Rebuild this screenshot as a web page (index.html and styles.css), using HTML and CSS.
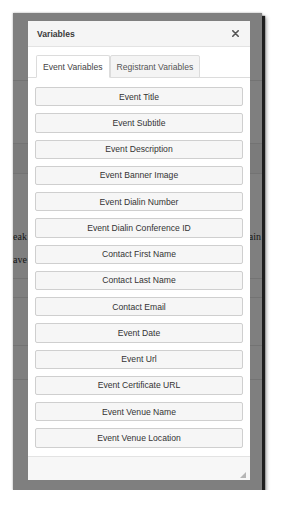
FILE: index.html
```html
<!DOCTYPE html>
<html>
<head>
  <meta charset="utf-8">
  <link rel="stylesheet" href="styles.css">
</head>
<body>
  <div class="screen">
    <div class="page">
      <div class="row r1"></div>
      <div class="row r2"></div>
      <div class="row r3"></div>
      <div class="row r4">
        <div class="line"><span>eak</span><span>ain</span></div>
        <div class="line"><span>ave</span></div>
      </div>
      <div class="row r5"></div>
      <div class="row r6"></div>
      <div class="row r7"></div>
    </div>

    <div class="dialog">
      <div class="dlg-head">
        <span class="dlg-title">Variables</span>
        <svg class="close" width="7" height="7" viewBox="0 0 7 7">
          <path d="M0.8 0.8 L6.2 6.2 M6.2 0.8 L0.8 6.2" stroke="#555" stroke-width="1.6" stroke-linecap="round"/>
        </svg>
      </div>
      <div class="dlg-body">
        <div class="tabs">
          <div class="tab active">Event Variables</div>
          <div class="tab">Registrant Variables</div>
        </div>
        <div class="vars">
          <button class="var">Event Title</button>
          <button class="var">Event Subtitle</button>
          <button class="var">Event Description</button>
          <button class="var">Event Banner Image</button>
          <button class="var">Event Dialin Number</button>
          <button class="var">Event Dialin Conference ID</button>
          <button class="var">Contact First Name</button>
          <button class="var">Contact Last Name</button>
          <button class="var">Contact Email</button>
          <button class="var">Event Date</button>
          <button class="var">Event Url</button>
          <button class="var">Event Certificate URL</button>
          <button class="var">Event Venue Name</button>
          <button class="var">Event Venue Location</button>
        </div>
      </div>
      <div class="dlg-foot">
        <svg class="grip" width="6" height="6" viewBox="0 0 6 6">
          <polygon points="6,0 6,6 0,6" fill="#b5b5b5"/>
        </svg>
      </div>
    </div>
  </div>
</body>
</html>
```

FILE: styles.css
```css
body {
  margin: 0;
  background: #fff;
  font-family: "Liberation Sans", Arial, sans-serif;
}

.screen {
  position: relative;
  margin: 13px 0 0 13px;
  width: 249px;
  height: 477px;
  background: #7f7f7f;
  overflow: hidden;
  box-shadow: 3px 3px 1px #1e1e1e, 4px 4px 4px rgba(0,0,0,0.45), 0 0 2px rgba(0,0,0,0.35);
}

/* darkened page behind the modal */
.page {
  display: flex;
  flex-direction: column;
}

.row {
  border-bottom: 1px solid #737373;
}

.r1 { height: 67px; }
.r2 { height: 62px; }
.r3 { height: 29px; background: #7b7b7b; }
.r4 {
  height: 105px;
  display: flex;
  flex-direction: column;
  justify-content: flex-end;
  padding-bottom: 12px;
  box-sizing: border-box;
  gap: 10px;
}
.r5 { height: 18px; }
.r6 { height: 47px; }
.r7 { height: 33px; }

.line {
  display: flex;
  justify-content: space-between;
  padding-right: 1px;
  font-family: "Liberation Serif", serif;
  font-size: 10px;
  color: #151515;
  line-height: 13px;
}

/* modal */
.dialog {
  position: absolute;
  left: 15px;
  top: 8px;
  width: 222px;
  height: 459px;
  background: #fff;
  display: flex;
  flex-direction: column;
  color: #333;
}

.dlg-head {
  height: 26px;
  box-sizing: border-box;
  background: #f5f5f5;
  border-bottom: 1px solid #e3e3e3;
  display: flex;
  align-items: center;
  justify-content: space-between;
  padding: 0 11px 0 9px;
}

.dlg-title {
  font-size: 8.6px;
  font-weight: bold;
  color: #3a3a3a;
}

.dlg-body {
  flex: 1;
  padding-top: 8px;
}

.tabs {
  display: flex;
  padding-left: 8px;
  border-bottom: 1px solid #dcdcdc;
}

.tab {
  height: 23px;
  box-sizing: border-box;
  padding: 0 6px;
  display: flex;
  align-items: center;
  font-size: 8.6px;
  color: #555;
  background: #f4f4f4;
  border: 1px solid #dcdcdc;
  border-radius: 2px 2px 0 0;
  margin-bottom: -1px;
}

.tab.active {
  background: #fff;
  border-bottom-color: #fff;
  color: #444;
}

.vars {
  display: flex;
  flex-direction: column;
  gap: 7px;
  padding: 9px 7px 0;
}

.var {
  height: 19.25px;
  margin: 0;
  padding: 0;
  background: #f6f6f6;
  border: 1px solid #cfcfcf;
  border-radius: 2px;
  font-family: "Liberation Sans", Arial, sans-serif;
  font-size: 8.6px;
  color: #333;
  text-align: center;
}

.dlg-foot {
  height: 24px;
  box-sizing: border-box;
  border-top: 1px solid #e3e3e3;
  background: #f7f7f7;
  display: flex;
  align-items: flex-end;
  justify-content: flex-end;
  padding: 0 4px 2px 0;
}
```
